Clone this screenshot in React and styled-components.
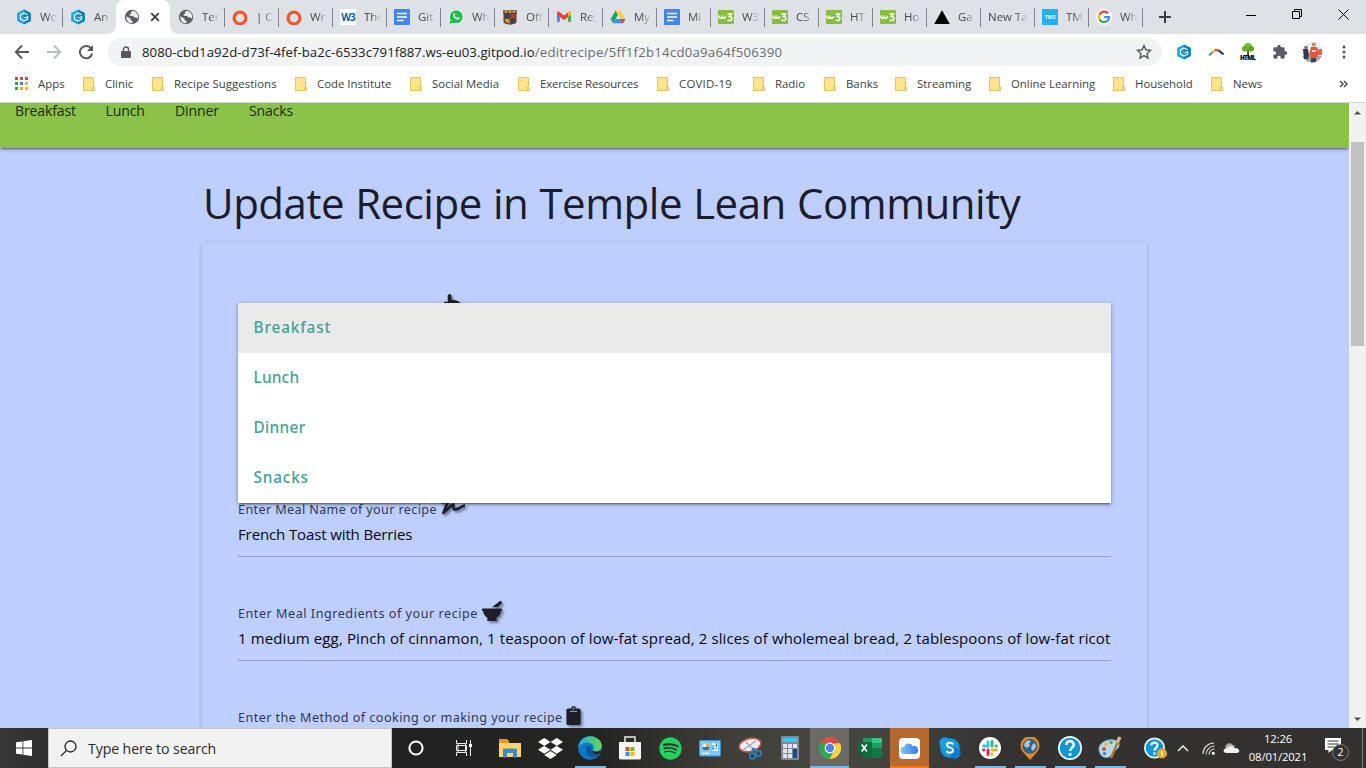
import React from "react";
import styled, { createGlobalStyle } from "styled-components";
import { FaDropbox, FaSpotify, FaSignature, FaMortarPestle, FaClipboard, FaHandPointUp } from "react-icons/fa";

const ui = `"Open Sans", "Noto Sans", sans-serif`;

const Global = createGlobalStyle`
  *{box-sizing:border-box}
  body{margin:0;font-family:${ui};overflow:hidden}
  svg{display:block;flex:none}
`;
const Screen = styled.div`width:1366px;height:768px;display:flex;flex-direction:column;overflow:hidden;background:#fff;`;

/* browser chrome */
const TabStrip = styled.div`height:34px;background:#dee1e6;display:flex;padding-left:8px;flex:none;`;
const Tab = styled.div`
  width:54px;height:34px;display:flex;align-items:center;padding-left:8px;position:relative;
  ${(p) => p.$line && `&::after{content:"";position:absolute;right:-1px;top:8px;width:1px;height:19px;background:#808389;}`}
  ${(p) => p.$active && `background:#fff;border-radius:8px 8px 0 0;
    &::before,&::after{content:"";position:absolute;bottom:0;width:8px;height:8px;}
    &::before{left:-8px;background:radial-gradient(circle at 0 0,transparent 7.5px,#fff 8px);}
    &::after{right:-8px;background:radial-gradient(circle at 100% 0,transparent 7.5px,#fff 8px);}`}
`;
const TabTitle = styled.span`
  width:${(p) => (p.$wide ? 42 : 18)}px;margin-left:${(p) => (p.$wide ? 0 : 8)}px;white-space:nowrap;
  font-size:11.5px;line-height:16px;color:#45494d;
  mask-image:linear-gradient(to right,#000 ${(p) => (p.$wide ? 65 : 40)}%,transparent 96%);
`;
const Plus = styled.div`width:46px;display:flex;align-items:center;justify-content:center;`;
const WindowButtons = styled.div`margin-left:auto;display:flex;height:29px;`;
const WindowButton = styled.div`width:46px;display:flex;align-items:center;justify-content:center;`;

const Toolbar = styled.div`height:36px;display:flex;align-items:center;flex:none;padding-left:14px;`;
const NavIcon = styled.div`width:32px;display:flex;`;
const Address = styled.div`
  width:1054px;height:28px;margin-left:-2px;border-radius:14px;background:#f1f3f4;display:flex;align-items:center;padding:0 10px 0 13px;
`;
const Url = styled.div`margin-left:11px;font-size:13.2px;letter-spacing:.03px;color:#202124;white-space:nowrap;flex:1;span{color:#696d72;letter-spacing:.24px}`;
const Ext = styled.div`width:32px;display:flex;justify-content:center;`;
const ExtRow = styled.div`display:flex;align-items:center;padding-left:6px;`;

const Bookmarks = styled.div`height:33px;border-bottom:1px solid #d5d8d4;display:flex;padding:0 0 5px 15px;align-items:center;flex:none;`;
const Bookmark = styled.div`
  width:${(p) => p.$w}px;display:flex;align-items:center;gap:${(p) => p.$gap || 10}px;white-space:nowrap;
  font-size:11.4px;letter-spacing:${(p) => p.$ls || 0}px;color:#3c4043;line-height:16px;
`;
const More = styled.div`margin-left:auto;padding-right:18px;`;

/* page */
const Viewport = styled.div`height:625px;display:flex;background:#becfff;flex:none;overflow:hidden;`;
const Page = styled.div`width:1349px;overflow:hidden;`;
const GreenNav = styled.nav`
  height:45px;background:#8bc34a;display:flex;padding-left:15px;font-size:14.1px;letter-spacing:-.15px;line-height:16px;color:#1e2a12;
  box-shadow:0 2px 2px 0 rgba(0,0,0,.14),0 3px 1px -2px rgba(0,0,0,.25),0 1px 5px 0 rgba(0,0,0,.22);
`;
const NavLink = styled.span`width:${(p) => p.$w}px;white-space:nowrap;`;
const Container = styled.main`width:945px;margin-left:202px;`;
const Title = styled.h1`
  margin:0;height:94px;padding:25px 0 0 1px;font-weight:400;font-size:42px;line-height:60px;color:#1b1d2b;white-space:nowrap;
  letter-spacing:-.48px;word-spacing:.7px;
`;
const Card = styled.section`
  height:600px;margin-top:1px;padding:35px 36px;
  box-shadow:0 2px 2px 0 rgba(0,0,0,.1),0 3px 1px -2px rgba(0,0,0,.1),0 1px 5px 0 rgba(0,0,0,.16);
`;
const Field = styled.div`position:relative;height:${(p) => p.$h || 104}px;`;
const Label = styled.div`
  height:24px;display:flex;align-items:center;white-space:nowrap;font-family:"Noto Sans",${ui};
  font-size:12.6px;letter-spacing:${(p) => p.$ls ?? 0.45}px;color:#2f3752;
`;
const LabelIcon = styled.span`color:#1d1f28;margin-left:${(p) => p.$ml ?? 4}px;margin-top:-4px;svg{filter:drop-shadow(2px 2px 1px rgba(0,0,0,.4));}`;
const Value = styled.div`
  height:36px;line-height:26px;border-bottom:1px solid #959fba;overflow:hidden;white-space:nowrap;
  font-size:15px;color:#06070d;letter-spacing:${(p) => p.$ls || 0}px;
`;
const CoveredLabel = styled.div`padding:16px 0 0 203px;color:#1d1f28;svg{filter:drop-shadow(2px 2px 1px rgba(0,0,0,.4));}`;
const Menu = styled.ul`
  position:absolute;left:0;right:0;top:25px;margin:0;padding:0;list-style:none;background:#fff;z-index:2;
  box-shadow:0 2px 2px 0 rgba(0,0,0,.2),0 3px 1px -2px rgba(0,0,0,.2),0 1px 5px 0 rgba(0,0,0,.25);
`;
const Option = styled.li`
  height:50px;padding:0 15.5px;line-height:49px;font-family:"Noto Sans",${ui};font-size:15.4px;letter-spacing:${(p) => p.$ls}px;color:#42a197;font-weight:500;
  background:${(p) => (p.$selected ? "#eaeaea" : "#fff")};
`;
const Scrollbar = styled.div`width:17px;background:#f1f1f1;display:flex;flex-direction:column;align-items:center;padding:7px 0 6px;`;
const Thumb = styled.div`width:13px;height:204px;margin-top:27px;margin-bottom:auto;background:#c1c1c1;`;

/* taskbar */
const Taskbar = styled.footer`
  height:40px;display:flex;flex:none;
  background:linear-gradient(to right,#363636 0,#303030 48px,#222 400px,#242423 600px,#3d3c37 720px,#47463e 810px,#45443f 880px,#353331 1000px,#333130 1366px);
`;
const Start = styled.div`width:48px;flex:none;display:flex;align-items:center;justify-content:center;`;
const Search = styled.div`
  width:344px;flex:none;background:#f2f2f2;border:1px solid #c5c5c5;display:flex;align-items:center;padding-left:11px;gap:11px;
  font-size:14.1px;color:#2b2b2b;white-space:nowrap;letter-spacing:-.08px;
`;
const Task = styled.div`
  width:${(p) => p.$w || 40}px;flex:none;display:flex;align-items:center;justify-content:center;
`;
const AppRow = styled.div`display:flex;flex:none;padding-left:2px;`;
const AppButton = styled(Task)`
  flex-direction:column;
  ${(p) => p.$bg && `background:${p.$bg};background-clip:content-box;padding-right:1px;`}
  &::after{content:"";width:${(p) => (p.$bg ? 39 : 31)}px;height:2px;background:${(p) => p.$run || "transparent"};}
`;
const IconSlot = styled.div`height:38px;display:flex;align-items:center;justify-content:center;padding-top:2px;`;
const Tray = styled.div`display:flex;flex:1;align-items:center;color:#fff;padding-left:13px;`;
const TraySlot = styled.div`width:${(p) => p.$w}px;flex:none;display:flex;justify-content:center;`;
const Clock = styled.div`width:70px;flex:none;text-align:center;font-size:11.3px;line-height:18px;letter-spacing:-.15px;white-space:nowrap;`;
const Desktop = styled.div`margin-left:auto;width:4px;height:40px;border-left:1px solid #85827e;`;

/* icons */
const Gitpod = () => (
  <svg width="16" height="16" viewBox="0 0 16 16">
    <path d="M8 .4 14.8 4v8L8 15.6 1.2 12V4z" fill="#1aa6e4" />
    <path d="M8 .4 14.8 4v8L8 15.6z" fill="#1482bd" />
    <path d="M11.300 5.700 8 3.900 4.400 5.900v4.200L8 12.100l3.600-2V7.800L8.200 9" fill="none" stroke="#e8f7ff" strokeWidth="1.200" />
  </svg>
);
const Globe = () => (
  <svg width="16" height="16" viewBox="0 0 16 16">
    <circle cx="8" cy="8" r="7.2" fill="#5a5e63" />
    <path d="M2.2 7.2 6.4 9.4l.3 1.9 1.9.8-.3 2.2C4.600 14.300 1.900 11.300 2.200 7.200zM8.500 1.800l-1.700 1.500.6 1.300-2 .8.4 1.300 3.200.3 1.500 1.600 2-.1 1.500 1.300c1.100-4.300-1.900-7.800-5.500-8z" fill="#eceef1" />
  </svg>
);
const Ring = () => <svg width="16" height="16" viewBox="0 0 16 16"><circle cx="8" cy="9" r="5.900" fill="none" stroke="#f05a2b" strokeWidth="3.200" /></svg>;
const Badge = styled.span`
  width:16px;height:${(p) => p.$h || 16}px;background:${(p) => p.$bg};color:${(p) => p.$fg};display:flex;align-items:center;justify-content:center;
  font:${(p) => p.$font};letter-spacing:${(p) => p.$ls || 0}px;flex:none;
`;
const W3 = () => <Badge $bg="#fff" $fg="#0b62a8" $font={`700 10px/16px "Open Sans"`} $ls={-1}>W3</Badge>;
const Docs = () => (
  <svg width="16" height="16"><rect width="16" height="16" rx="1" fill="#4484f1" /><path d="M3 4.500h10M3 8h10M3 11.500h6.500" stroke="#fff" strokeWidth="1.600" /></svg>
);
const Whats = () => (
  <svg width="16" height="16" viewBox="0 0 16 16"><circle cx="8.200" cy="7.800" r="7.300" fill="#fff" /><path d="M.5 15.700 2 11.500l3 3z" fill="#fff" /><circle cx="8.200" cy="7.800" r="6.500" fill="#1dbe4e" /><path d="M1.200 15l1.200-4 2.800 2.800z" fill="#1dbe4e" /><path d="M5.300 4.400c.9-.7 1.300-.2 1.800 1.200l-.6.9c.6 1.300 1.500 2 2.700 2.500l.9-1c1.500.6 1.900.9 1.300 1.800-1.500 2.600-7.600-1.700-6.100-5.400z" fill="#fff" /></svg>
);
const Crest = () => (
  <svg width="16" height="16" viewBox="0 0 16 16"><path d="M1 1h14v4H1z" fill="#8a6d3a" /><path d="M1.500 4h13v9c0 1.500-3 2-6.500 2.700C4.500 15 1.500 14.500 1.500 13z" fill="#5f4434" /><path d="M3 5h4.500v4H3z" fill="#27446f" /><path d="M8.500 5H13v4H8.500z" fill="#b23a2c" /><path d="M3 10h4.500v4.500C5 13.700 3 13 3 11z" fill="#d39a2b" /><path d="M8.500 10H13v1c0 2-2 2.700-4.500 3.500z" fill="#3a4456" /><path d="M3 2.500h2M7 2.500h2M11 2.500h2" stroke="#e2b03c" strokeWidth="1.500" /></svg>
);
const Gmail = () => (
  <svg width="16" height="16" viewBox="0 0 16 16"><path d="M1 4.500v8.300h2.900V7.600z" fill="#4285f4" /><path d="M15 4.500v8.300h-2.900V7.600z" fill="#34a853" /><path d="M1 5.700V4c0-1.300 1.300-1.800 2.400-1L8 6.400 12.600 3C13.700 2.200 15 2.700 15 4v1.700l-2.900 2.200L8 11 3.900 7.900z" fill="#ea4335" /><path d="M12.100 3.400 12.800 3c1-.7 2.200 0 2.200 1v1.700l-2.900 2.200z" fill="#fbbc04" /></svg>
);
const Drive = () => (
  <svg width="16" height="16" viewBox="0 0 16 16"><path d="M5.600 1.500 8 5.700 3.200 14.200.7 10z" fill="#11a861" /><path d="M5.600 1.500h4.900L15.400 10h-4.900z" fill="#ffcf48" /><path d="M5.700 10h9.700l-2.500 4.200H3.200z" fill="#4688f4" /><path d="m10.500 10 4.900 0-2.500 4.200z" fill="#e9453a" /></svg>
);
const Schools = () => (
  <svg width="16" height="16" viewBox="0 0 16 16"><rect y="1" width="16" height="14" rx="1" fill="#86bf3e" /><path d="M1 6.500v1.200c0 2 3 2 3 0V6.500v1.200c0 2 3.500 2 3.500-.5M9.500 5h4l-2.200 2.600c3.700-.2 3.200 4.400.3 4-1.400-.1-2-.8-2-.8" fill="none" stroke="#fff" strokeWidth="1.500" /></svg>
);
const Tri = () => <svg width="16" height="16"><path d="M8 1.200 15.800 15H.2z" fill="#000" /></svg>;
const Tm3 = () => <Badge $bg="#20b1f8" $fg="#fff" $font={`700 5px/16px "Open Sans"`}>TM3</Badge>;
const Google = () => (
  <svg width="16" height="16" viewBox="0 0 16 16"><circle cx="8" cy="8" r="8" fill="#fff" /><g fill="none" strokeWidth="2.200"><path d="M12 4.500A5 5 0 0 0 3.500 5.700" stroke="#ea4335" /><path d="M3.500 5.600a5 5 0 0 0 0 4.800" stroke="#fbbc05" /><path d="M3.500 10.300A5 5 0 0 0 11.500 11.800" stroke="#34a853" /><path d="M11.400 11.900A5 5 0 0 0 13 8H8.200" stroke="#4285f4" /></g></svg>
);

const tabs = [
  [Gitpod, "Wo", 1], [Gitpod, "An", 0], null, [Globe, "Ter", 1], [Ring, "| C", 1], [Ring, "Wr", 1], [W3, "The", 1], [Docs, "Git", 1],
  [Whats, "Wh", 1], [Crest, "Off", 1], [Gmail, "Re:", 1], [Drive, "My", 1], [Docs, "Mi", 1], [Schools, "W3", 1], [Schools, "CS", 1],
  [Schools, "HT", 1], [Schools, "Ho", 1], [Tri, "Ga", 1], [null, "New Ta", 1], [Tm3, "TM", 1], [Google, "Wh", 1],
];
const bookmarks = [
  ["Clinic", 69], ["Recipe Suggestions", 143, 0.05], ["Code Institute", 115], ["Social Media", 108, 0.05], ["Exercise Resources", 139, -0.15], ["COVID-19", 96, 0.25],
  ["Radio", 71], ["Banks", 71], ["Streaming", 94], ["Online Learning", 124], ["Household", 98], ["News", 60],
];
const Folder = () => (
  <svg width="12" height="14"><path d="M.5.5h10v9.500h1v3.500H.5z" fill="#ffe48f" stroke="#e5c65c" /><path d="M9.500 13V9.500" stroke="#e5c65c" /></svg>
);
const AppsGrid = () => (
  <svg width="14" height="14">
    {["#d34a3f", "#d34a3f", "#d34a3f", "#3f9d5c", "#4a86dd", "#e6b535", "#3f9d5c", "#e6a435", "#e6b535"].map((c, i) => (
      <rect key={i} x={(i % 3) * 5} y={Math.floor(i / 3) * 5} width="3" height="3" fill={c} />
    ))}
  </svg>
);

const Help = ({ s = 24 }) => (
  <svg width={s} height={s} viewBox="0 0 24 24"><circle cx="12" cy="12" r="12" fill="#f3fbff" /><circle cx="12" cy="12" r="10.300" fill="#0d96d6" /><path d="M8.300 9C8.500 4 16 4.300 15.800 8.800c-.1 2.900-3.600 2.900-3.600 6.200" fill="none" stroke="#fff" strokeWidth="2.500" /><circle cx="12.100" cy="18.300" r="1.500" fill="#fff" /></svg>
);
const apps = [
  { icon: <svg width="22" height="19" viewBox="0 0 22 19"><path d="M0 0h8l2 2v4H0z" fill="#dd9c1e" /><path d="M0 4h22v14H0z" fill="#fdd46a" /><path d="M4 18.500V10.500q0-1 1-1h12q1 0 1 1v8h-4V14H8v4.500z" fill="#418bc0" /></svg> },
  { icon: <FaDropbox size={25} color="#fff" /> },
  { run: "#76b9ed", icon: <svg width="24" height="24" viewBox="0 0 24 24"><defs><linearGradient id="e1" x1="0" x2="1"><stop offset="0" stopColor="#2aa7e0" /><stop offset="1" stopColor="#62d957" /></linearGradient></defs><circle cx="12" cy="12" r="11.800" fill="#1076c8" /><path d="M.2 12C.5 5 6 0 12.500.2 19 .5 24 5 23.800 10c-.3 5-6 6-9 4.500 2.500-3 .5-6.500-3-7.500C7 6 2 8 .2 12z" fill="url(#e1)" /><path d="M14.500 14.500c-1.500-1-1.300-2-.7-3.300-2-2.600-5.200-1.200-5.800 1.500-1 4.500 2.500 9 8.500 8.800 2-.5 4-2 5-3.800-3 1.300-6 .5-7-3.200z" fill="#10549c" /><path d="M14.500 14.500c1.500 1.500 5.500 1.500 8 .2l1.500 1-2.500 2c-4 1.500-7-.5-7-3.200z" fill="#23231f" /></svg> },
  { icon: <svg width="24" height="24" viewBox="0 0 24 24"><path d="M7 7V1h10v6" fill="none" stroke="#eee" strokeWidth="1.500" /><path d="M1 6h22v16q0 1.500-1.500 1.500h-19Q1 23.500 1 22z" fill="#f6f6f6" /><path d="M7.500 11h4v4h-4z" fill="#e84f25" /><path d="M12.500 11h4v4h-4z" fill="#7eb900" /><path d="M7.500 16h4v4h-4z" fill="#1aa2e8" /><path d="M12.500 16h4v4h-4z" fill="#fcb810" /></svg> },
  { icon: <FaSpotify size={23} color="#1ed45f" /> },
  { icon: <svg width="22" height="17" viewBox="0 0 22 17"><rect x=".5" y=".5" width="21" height="15.500" rx="1" fill="#7dcafa" stroke="#3c93d3" /><circle cx="7" cy="7" r="3.600" fill="#eaf6fd" /><path d="M7 7V3.400A3.600 3.600 0 0 1 10.600 7z" fill="#f4a52c" /><path d="M3.400 7a3.600 3.600 0 0 0 7.200 0z" fill="#2875bd" /><path d="M13 4h6M13 7h6M13 10h6M3 13.300h7" stroke="#fff" strokeWidth="1.300" /><path d="M14 10V6M17.500 7V3" stroke="#2875bd" /></svg> },
  { icon: <svg width="25" height="23" viewBox="0 0 25 23"><ellipse cx="12" cy="8" rx="11" ry="6.500" transform="rotate(-14 12 8)" fill="#eee" stroke="#c75552" strokeWidth="1.600" /><path d="M5 13 18 4M8 5l8 8" stroke="#a6abb0" strokeWidth="1.500" /><circle cx="14.500" cy="19" r="2.800" fill="none" stroke="#277fbd" strokeWidth="1.700" /><circle cx="20.500" cy="16.500" r="2.800" fill="none" stroke="#277fbd" strokeWidth="1.700" /><path d="m14 16 1-5M19 14l-4-3" stroke="#277fbd" strokeWidth="1.700" /></svg> },
  { icon: <svg width="18" height="24" viewBox="0 0 18 24"><rect width="18" height="24" rx="1" fill="#7e8994" /><rect x="2" y="2" width="14" height="4" fill="#38c6f4" />{[8, 13, 18].map((y) => [2, 7, 12].map((x) => <rect key={`${x}-${y}`} x={x} y={y} width="4" height="4" fill={x === 12 && y > 8 ? "#174c8c" : "#e1e6ea"} />))}<path d="M12 17h4v2h-4z" fill="#174c8c" /></svg> },
  { run: "#76b9ed", bg: "#6a6965", icon: <svg width="22" height="22" viewBox="0 0 22 22"><circle cx="11" cy="11" r="11" fill="#34a652" /><path d="M1.500 5.500A11 11 0 0 1 20.500 5.500L15.500 11 11 6z" fill="#e24a3c" /><path d="M20.500 5.500A11 11 0 0 1 10.500 22l5-9V6.200h5.400z" fill="#fdcf41" /><path d="M11 5.500h9.600l-.8-1.300L11 4z" fill="#e24a3c" /><circle cx="11" cy="11" r="5.400" fill="#fff" /><circle cx="11" cy="11" r="4.200" fill="#4587ee" /></svg> },
  { icon: <svg width="24" height="22" viewBox="0 0 24 22"><path d="M5 1h19v20H5z" fill="#1e9d60" /><path d="M14 1h10v5H14z" fill="#35c583" /><path d="M14 11h10v5H14z" fill="#107c41" /><path d="M5 6h9v15H5z" fill="#186a3d" /><path d="M14 16h10v5H14z" fill="#1a7544" /><rect x="0" y="5" width="13" height="12" rx="1" fill="#0d6a3a" /><path d="m3.700 7.500 5.200 7M8.900 7.500l-5.200 7" stroke="#fff" strokeWidth="1.700" /></svg> },
  { run: "#f4780a", bg: "#b7682c", icon: <svg width="21" height="21" viewBox="0 0 21 21"><defs><linearGradient id="ic" x1="0" x2="1"><stop offset="0" stopColor="#86c8fb" /><stop offset="1" stopColor="#3478ee" /></linearGradient></defs><rect width="21" height="21" rx="4" fill="#fff" /><path d="M5 16a3.600 3.600 0 0 1 .2-7.200A4.700 4.700 0 0 1 14 8.300 3.900 3.900 0 0 1 16 16z" fill="url(#ic)" /></svg> },
  { icon: <svg width="22" height="22" viewBox="0 0 22 22"><circle cx="11" cy="11" r="9.800" fill="#109bdf" /><circle cx="6" cy="6" r="5.700" fill="#189fe0" /><circle cx="16" cy="16" r="5.700" fill="#0d7ed3" /><path d="M14.200 7.300C12.300 4.700 7.600 5.500 8 8.300c.4 2.800 6 2 6 5 0 3-5 3.300-6.600.7" fill="none" stroke="#fff" strokeWidth="2" /></svg> },
  { run: "#76b9ed", icon: <svg width="22" height="22" viewBox="0 0 22 22"><circle cx="11" cy="11" r="11" fill="#fff" /><g strokeWidth="2.900" strokeLinecap="round"><path d="M9 5v4" stroke="#36c5f0" /><path d="M4.500 9H9" stroke="#36c5f0" /><path d="M13 4.500V9M17.500 9H17" stroke="#2eb67d" /><path d="M13 13h4.500M13 17.500V17" stroke="#ecb22e" /><path d="M9 13v4.500M4.500 13H5" stroke="#e01e5a" /></g></svg> },
  { run: "#76b9ed", icon: <svg width="20" height="23" viewBox="0 0 20 23"><path d="M10 23 2.500 14.500A9.500 9.500 0 1 1 17.500 14.500z" fill="#e8891b" /><circle cx="10" cy="9.300" r="7.500" fill="#30618e" /><path d="m5 5 4-2 2 2-2 1 1 3-3 2-3-2zM12 8l3-2 1 4-3 4-2-2z" fill="#a9c5da" /></svg> },
  { run: "#76b9ed", icon: <Help /> },
  { run: "#76b9ed", icon: <svg width="24" height="24" viewBox="0 0 24 24"><path d="M1 14C0 8 8 2.500 16 4c5 1 7 6 3 9-2 1.500-3 1-4 3-1 3-3 5.500-6.500 5.500C4 21.500 1.500 18 1 14z" fill="#b8d9ea" stroke="#7ba9c1" /><circle cx="6" cy="13" r="2" fill="#d64e38" /><circle cx="8" cy="8.500" r="1.700" fill="#e7b43a" /><circle cx="13" cy="6.500" r="1.700" fill="#5ea944" /><circle cx="6.500" cy="17.500" r="1.600" fill="#397bb6" /><path d="M21.500 2 13 22" stroke="#b9753a" strokeWidth="2.400" /><path d="m19 7 3-6" stroke="#d6b183" strokeWidth="3.500" /></svg> },
];

export default function App() {
  return (
    <Screen>
      <Global />
      <TabStrip>
        {tabs.map((t, i) => {
          if (!t) return (
            <Tab key={i} $active>
              <Globe />
              <svg width="30" height="10" viewBox="-10 0 30 10"><path d="m1.200 1.200 7.600 7.600M8.800 1.200 1.200 8.800" stroke="#3b3f43" strokeWidth="1.800" /></svg>
            </Tab>
          );
          const Icon = t[0];
          return <Tab key={i} $line={t[2]}>{Icon && <Icon />}<TabTitle $wide={!Icon}>{t[1]}</TabTitle></Tab>;
        })}
        <Plus><svg width="12" height="12"><path d="M6 0v12M0 6h12" stroke="#3b3f43" strokeWidth="2" /></svg></Plus>
        <WindowButtons>
          <WindowButton><svg width="10" height="10"><path d="M0 5.500h10" stroke="#000" /></svg></WindowButton>
          <WindowButton><svg width="11" height="11"><path d="M.5 2.500h7v7h-7zM2.500 2.500v-2h7v7h-2" fill="none" stroke="#000" /></svg></WindowButton>
          <WindowButton><svg width="11" height="11"><path d="m.5.5 10 10M10.500.5l-10 10" stroke="#000" /></svg></WindowButton>
        </WindowButtons>
      </TabStrip>
      <Toolbar>
        <NavIcon><svg width="16" height="16"><path d="M15 8H2M8 1.500 1.800 8 8 14.500" fill="none" stroke="#55595e" strokeWidth="1.900" /></svg></NavIcon>
        <NavIcon><svg width="16" height="16"><path d="M1 8h13M8 1.500 14.200 8 8 14.500" fill="none" stroke="#b9bcbf" strokeWidth="1.900" /></svg></NavIcon>
        <NavIcon><svg width="16" height="16"><path d="M13.200 4.500A6.200 6.200 0 1 0 14.200 9.500" fill="none" stroke="#55595e" strokeWidth="2" /><path d="M15 1v6H9z" fill="#55595e" /></svg></NavIcon>
        <Address>
          <svg width="10" height="13" viewBox="0 0 10 13"><path d="M1 5h8q1 0 1 1v5q0 1-1 1H1q-1 0-1-1V6q0-1 1-1z" fill="#55595e" /><path d="M2.500 5.500V3.500a2.500 2.500 0 0 1 5 0v2" fill="none" stroke="#55595e" strokeWidth="1.400" /></svg>
          <Url>8080-cbd1a92d-d73f-4fef-ba2c-6533c791f887.ws-eu03.gitpod.io<span>/editrecipe/5ff1f2b14cd0a9a64f506390</span></Url>
          <svg width="16" height="16" viewBox="0 0 16 16"><path d="m8 1.500 1.900 4.300 4.600.5-3.500 3.100 1 4.600L8 11.600 4 14l1-4.600L1.500 6.300l4.600-.5z" fill="none" stroke="#55595e" strokeWidth="1.400" /></svg>
        </Address>
        <ExtRow>
          <Ext><Gitpod /></Ext>
          <Ext><svg width="16" height="16" viewBox="0 0 16 16"><path d="M1 11.500 5 7.800" stroke="#3a8fc3" strokeWidth="2" fill="none" /><path d="M4 8.500 7.500 6" stroke="#f0b53a" strokeWidth="2.400" fill="none" /><path d="M7 6q2.500-.3 4.500 1" stroke="#dd5b3b" strokeWidth="2.600" fill="none" /><path d="M11 6.700 15.500 10.500" stroke="#283f63" strokeWidth="2.200" fill="none" /></svg></Ext>
          <Ext><svg width="18" height="18" viewBox="0 0 18 18"><path d="M8 6h2v6H8z" fill="#7b4a20" /><circle cx="9" cy="3.800" r="3.800" fill="#77bd27" /><circle cx="5.800" cy="5.700" r="2.800" fill="#69ae20" /><circle cx="12.200" cy="5.700" r="2.800" fill="#5ea31c" /><text x="1" y="16.500" fontFamily="Open Sans" fontWeight="800" fontSize="6.300" textLength="16" fill="#000">HTML</text></svg></Ext>
          <Ext><svg width="16" height="16" viewBox="0 0 24 24"><path d="M20.500 11H19V7c0-1.100-.9-2-2-2h-4V3.500a2.500 2.500 0 0 0-5 0V5H4c-1.100 0-2 .9-2 2v3.800h1.500a2.700 2.700 0 0 1 0 5.400H2V20c0 1.100.9 2 2 2h3.800v-1.500a2.700 2.700 0 0 1 5.400 0V22H17c1.100 0 2-.9 2-2v-4h1.500a2.500 2.500 0 0 0 0-5z" fill="#595d62" /></svg></Ext>
          <Ext><svg width="22" height="22" viewBox="0 0 22 22"><defs><clipPath id="av"><circle cx="11" cy="11" r="10.500" /></clipPath></defs><g clipPath="url(#av)"><path fill="#e3f0f3" d="M0 0h22v22H0z" /><path fill="#a5a3a5" d="M0 15h22v7H0z" /><path fill="#30384f" d="M2 8h5l1 6-1 4H3z" /><circle cx="5" cy="6.500" r="1.700" fill="#8e6456" /><path fill="#e55436" d="M10 6h6l3 7-3 2v2h-6l-2-3z" /><path fill="#34466d" d="M10 17h5v5h-5z" /><circle cx="12.800" cy="3.500" r="2" fill="#c9876a" /><path fill="#de5f52" d="M18 8h3v6h-3z" /><path d="M11 10h4" stroke="#f6d6cc" strokeWidth="2" /></g></svg></Ext>
          <Ext><svg width="4" height="16"><circle cx="2" cy="3" r="1.500" fill="#55595e" /><circle cx="2" cy="8" r="1.500" fill="#55595e" /><circle cx="2" cy="13" r="1.500" fill="#55595e" /></svg></Ext>
        </ExtRow>
      </Toolbar>
      <Bookmarks>
        <Bookmark $w={68} $gap={9}><AppsGrid />Apps</Bookmark>
        {bookmarks.map(([name, w, ls]) => <Bookmark key={name} $w={w} $ls={ls}><Folder />{name}</Bookmark>)}
        <More><svg width="9" height="8"><path d="m1 1 3 3-3 3M5 1l3 3-3 3" fill="none" stroke="#4a4e52" strokeWidth="1.500" /></svg></More>
      </Bookmarks>

      <Viewport>
        <Page>
          <GreenNav>
            <NavLink $w={90.5}>Breakfast</NavLink><NavLink $w={69.5}>Lunch</NavLink><NavLink $w={74}>Dinner</NavLink><NavLink $w={76}>Snacks</NavLink>
          </GreenNav>
          <Container>
            <Title>Update Recipe in Temple Lean Community</Title>
            <Card>
              <Field $h={219}>
                <CoveredLabel><FaHandPointUp size={22} /></CoveredLabel>
                <Menu>
                  <Option $selected $ls={0.85}>Breakfast</Option><Option $ls={0.2}>Lunch</Option><Option $ls={0.35}>Dinner</Option><Option $ls={0.8}>Snacks</Option>
                </Menu>
              </Field>
              <Field>
                <Label $ls={0.38}>Enter Meal Name of your recipe<LabelIcon><FaSignature size={24} stroke="#1d1f28" strokeWidth={14} /></LabelIcon></Label>
                <Value $ls={-0.12}>French Toast with Berries</Value>
              </Field>
              <Field>
                <Label $ls={0.53}>Enter Meal Ingredients of your recipe<LabelIcon><FaMortarPestle size={20} /></LabelIcon></Label>
                <Value $ls={0.12}>1 medium egg, Pinch of cinnamon, 1 teaspoon of low-fat spread, 2 slices of wholemeal bread, 2 tablespoons of low-fat ricot</Value>
              </Field>
              <Field>
                <Label>Enter the Method of cooking or making your recipe<LabelIcon $ml={1}><FaClipboard size={19} /></LabelIcon></Label>
              </Field>
            </Card>
          </Container>
        </Page>
        <Scrollbar>
          <svg width="7" height="5"><path d="M0 4.500 3.500 1 7 4.500z" fill="#505050" /></svg>
          <Thumb />
          <svg width="7" height="5"><path d="M0 .5 3.500 4 7 .5z" fill="#505050" /></svg>
        </Scrollbar>
      </Viewport>

      <Taskbar>
        <Start><svg width="16" height="16" viewBox="0 0 16 16"><path d="M0 2.300 6.500 1.400v6.200H0zM7.300 1.300 16 0v7.600H7.300zM0 8.400h6.500v6.200L0 13.700zM7.300 8.400H16V16l-8.700-1.300z" fill="#fff" /></svg></Start>
        <Search><svg width="17" height="17"><circle cx="10.500" cy="6.500" r="5.500" fill="none" stroke="#222" strokeWidth="1.300" /><path d="M6.600 10.400 1 16" stroke="#222" strokeWidth="1.300" /></svg>Type here to search</Search>
        <Task $w={48}><svg width="16" height="16"><circle cx="8" cy="8" r="6.600" fill="none" stroke="#fff" strokeWidth="2" /></svg></Task>
        <Task $w={48}><svg width="17" height="16" viewBox="0 0 17 16"><path d="M.5 0v3.500h10V0M2 3.500v9M9.500 3.500v9M.5 5.500h10v5H.5zM.5 16v-3.500h10V16M14.500 0v16" fill="none" stroke="#eee" /><path d="M13 4h3v3h-3z" fill="#fff" /></svg></Task>
        <AppRow>
          {apps.map((a, i) => <AppButton key={i} $bg={a.bg} $run={a.run}><IconSlot>{a.icon}</IconSlot></AppButton>)}
        </AppRow>
        <Tray>
          <TraySlot $w={26}><svg width="24" height="22" viewBox="0 0 24 22"><circle cx="10.500" cy="11" r="10.500" fill="#eefaff" /><circle cx="10.500" cy="11" r="8.800" fill="#0d96d6" /><path d="M7.200 8.500c.3-4 6.600-3.700 6.300 0-.2 2.300-3 2.500-3 5" fill="none" stroke="#fff" strokeWidth="2.200" /><circle cx="10.500" cy="16.500" r="1.300" fill="#fff" /><circle cx="18" cy="16.500" r="5" fill="#eda824" /><path d="M18 14v5" stroke="#fff" strokeWidth="1.500" /></svg></TraySlot>
          <TraySlot $w={28}><svg width="12" height="8"><path d="m1 7 5-5 5 5" fill="none" stroke="#fff" strokeWidth="1.300" /></svg></TraySlot>
          <TraySlot $w={22}><svg width="13" height="13" viewBox="0 0 13 13"><g fill="none" stroke="#ddd" strokeWidth="1.100"><path d="M1 12C1 6 6 1 12 1M4 12.500C4 8 8 4 12.500 4M7 12.500C7 9.500 9.500 7 12.500 7" /></g><circle cx="11.300" cy="11.300" r="1.500" fill="#fff" /></svg></TraySlot>
          <TraySlot $w={24}><svg width="17" height="12" viewBox="0 0 17 12"><path d="M3 8C0 3 6-1 9.500 2.500l3 2z" fill="#aaa" /><path d="M3.500 11C-1 10.500 0 6 4 6.500 6 3 10 3.500 11.500 6c5-.5 6.500 4.500 2.500 5z" fill="#f1f1f1" /></svg></TraySlot>
          <Clock>12:26<br />08/01/2021</Clock>
          <TraySlot $w={48}><svg width="26" height="26" viewBox="0 0 26 26"><path d="M1 3h16v12H8l-3.500 3V15H1z" fill="#fff" /><path d="M3.500 6h11M3.500 9h11M3.500 12h7" stroke="#333" /><circle cx="16.500" cy="17.500" r="8" fill="#353331" stroke="#807d7a" /><text x="16.500" y="21.300" textAnchor="middle" fontFamily="Open Sans" fontSize="10.500" fill="#fff">2</text></svg></TraySlot>
          <Desktop />
        </Tray>
      </Taskbar>
    </Screen>
  );
}
